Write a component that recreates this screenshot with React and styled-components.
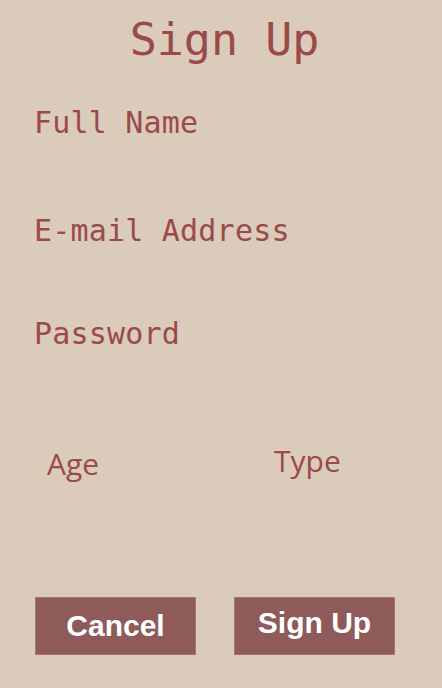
import React from "react";
import styled, { createGlobalStyle } from "styled-components";

const Global = createGlobalStyle`
  html, body { margin: 0; padding: 0; background: #dbcbbb; }
  #root { min-height: 688px; }
`;

const Page = styled.div`
  width: 442px;
  height: 688px;
  background: #dbcbbb;
  display: flex;
  flex-direction: column;
  box-sizing: border-box;
  padding-top: 17px;
  color: #9a4a4a;
`;

const Title = styled.h1`
  margin: 0;
  font-family: "DejaVu Sans Mono", monospace;
  font-weight: normal;
  font-size: 45px;
  line-height: 1;
  text-align: center;
  padding-left: 7px;
`;

const Label = styled.label`
  display: block;
  margin-top: ${(p) => p.$gap}px;
  padding-left: 34px;
  font-family: "DejaVu Sans Mono", monospace;
  font-size: 30px;
  line-height: 1;
  letter-spacing: 0.2px;
`;

const PairRow = styled.div`
  display: grid;
  grid-template-columns: 227px 1fr;
  padding-left: 47px;
  margin-top: 97px;
  align-items: start;
`;

const PairLabel = styled.span`
  display: block;
  font-family: "Open Sans", sans-serif;
  font-size: 30px;
  line-height: 1;
  margin-top: ${(p) => p.$offset}px;
`;

const ButtonRow = styled.div`
  display: flex;
  gap: 38px;
  padding-left: 35px;
  margin-top: 118px;
`;

const Button = styled.button`
  width: 161px;
  height: 58px;
  box-sizing: border-box;
  background: #8f5a5a;
  border: 1px solid #a7766f;
  color: #ffffff;
  font-family: "Liberation Sans", Arial, sans-serif;
  font-weight: bold;
  font-size: 30px;
  line-height: 1;
  padding: 0 0 ${(p) => (p.$lift ? 6 : 0)}px;
  display: flex;
  align-items: center;
  justify-content: center;
  cursor: pointer;
`;

export default function App() {
  return (
    <>
      <Global />
      <Page>
        <Title>Sign Up</Title>
        <Label $gap={46}>Full Name</Label>
        <Label $gap={78}>E-mail Address</Label>
        <Label $gap={73}>Password</Label>
        <PairRow>
          <PairLabel $offset={3}>Age</PairLabel>
          <PairLabel $offset={0}>Type</PairLabel>
        </PairRow>
        <ButtonRow>
          <Button>Cancel</Button>
          <Button $lift>Sign Up</Button>
        </ButtonRow>
      </Page>
    </>
  );
}
